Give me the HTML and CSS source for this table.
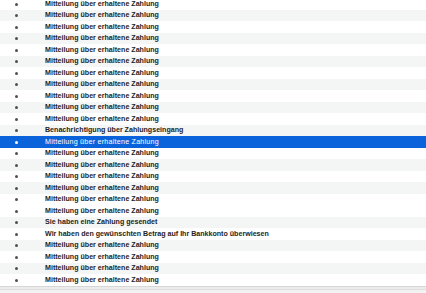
FILE: index.html
```html
<!DOCTYPE html>
<html lang="de">
<head>
<meta charset="utf-8">
<link rel="stylesheet" href="styles.css">
</head>
<body>
<div class="list">
  <div class="row"><span class="dot"></span><span class="subj">Mitteilung über erhaltene Zahlung</span></div>
  <div class="row alt"><span class="dot"></span><span class="subj">Mitteilung über erhaltene Zahlung</span></div>
  <div class="row"><span class="dot"></span><span class="subj">Mitteilung über erhaltene Zahlung</span></div>
  <div class="row alt"><span class="dot"></span><span class="subj">Mitteilung über erhaltene Zahlung</span></div>
  <div class="row"><span class="dot"></span><span class="subj">Mitteilung über erhaltene Zahlung</span></div>
  <div class="row alt"><span class="dot"></span><span class="subj">Mitteilung über erhaltene Zahlung</span></div>
  <div class="row"><span class="dot"></span><span class="subj">Mitteilung über erhaltene Zahlung</span></div>
  <div class="row alt"><span class="dot"></span><span class="subj">Mitteilung über erhaltene Zahlung</span></div>
  <div class="row"><span class="dot"></span><span class="subj">Mitteilung über erhaltene Zahlung</span></div>
  <div class="row alt"><span class="dot"></span><span class="subj">Mitteilung über erhaltene Zahlung</span></div>
  <div class="row"><span class="dot"></span><span class="subj">Mitteilung über erhaltene Zahlung</span></div>
  <div class="row alt"><span class="dot"></span><span class="subj">Benachrichtigung über Zahlungseingang</span></div>
  <div class="row selected"><span class="dot"></span><span class="subj">Mitteilung über erhaltene Zahlung</span></div>
  <div class="row"><span class="dot"></span><span class="subj">Mitteilung über erhaltene Zahlung</span></div>
  <div class="row alt"><span class="dot"></span><span class="subj">Mitteilung über erhaltene Zahlung</span></div>
  <div class="row"><span class="dot"></span><span class="subj">Mitteilung über erhaltene Zahlung</span></div>
  <div class="row alt"><span class="dot"></span><span class="subj">Mitteilung über erhaltene Zahlung</span></div>
  <div class="row"><span class="dot"></span><span class="subj">Mitteilung über erhaltene Zahlung</span></div>
  <div class="row"><span class="dot"></span><span class="subj">Mitteilung über erhaltene Zahlung</span></div>
  <div class="row alt"><span class="dot"></span><span class="subj">Sie haben eine Zahlung gesendet</span></div>
  <div class="row"><span class="dot"></span><span class="subj">Wir haben den gewünschten Betrag auf Ihr Bankkonto überwiesen</span></div>
  <div class="row alt"><span class="dot"></span><span class="subj">Mitteilung über erhaltene Zahlung</span></div>
  <div class="row"><span class="dot"></span><span class="subj">Mitteilung über erhaltene Zahlung</span></div>
  <div class="row alt"><span class="dot"></span><span class="subj">Mitteilung über erhaltene Zahlung</span></div>
  <div class="row"><span class="dot"></span><span class="subj">Mitteilung über erhaltene Zahlung</span></div>
</div>
<div class="footer"></div>
</body>
</html>
```
FILE: styles.css
```css
html, body {
  margin: 0;
  padding: 0;
  background: #ffffff;
  overflow: hidden;
}
body {
  width: 426px;
  height: 293px;
  font-family: "Liberation Sans", Arial, sans-serif;
}
.list {
  margin-top: -1.75px;
}
.row {
  display: flex;
  align-items: center;
  height: 11.5px;
  background: #ffffff;
}
.row.alt {
  background: #f4f5f5;
}
.row.selected {
  background: #0b63dc;
}
.dot {
  flex: none;
  width: 3px;
  height: 3px;
  border-radius: 50%;
  background: #505050;
  margin-left: 15px;
  margin-right: 27px;
}
.subj {
  font-size: 7.1px;
  line-height: 11.5px;
  padding-top: 1px;
  font-weight: 700;
  color: #1e1e1e;
  white-space: nowrap;
}
.selected .dot {
  background: #ffffff;
}
.selected .subj {
  color: #ffffff;
  font-weight: 400;
  letter-spacing: 0.25px;
}
.footer {
  height: 8px;
  border-top: 1px solid #d6d6d6;
  background: linear-gradient(#ececec 0 2px, #dedede 2px 3px, #f2f2f2 3px);
}
```
